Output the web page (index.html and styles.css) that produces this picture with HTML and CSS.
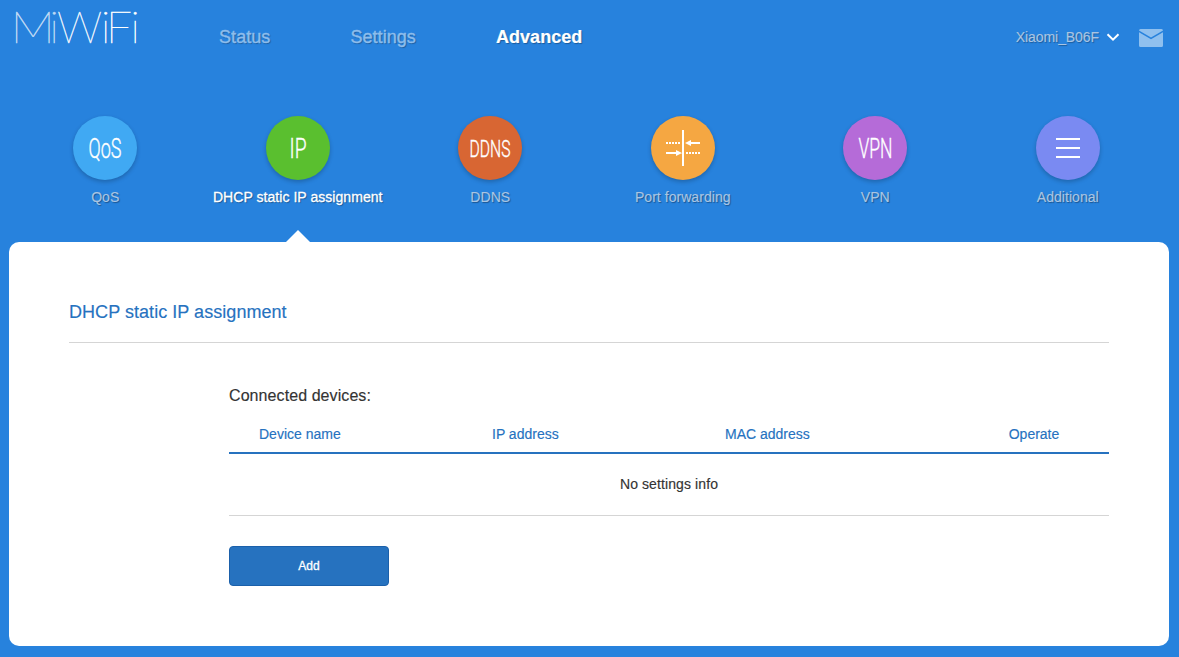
FILE: index.html
```
<!DOCTYPE html>
<html lang="en">
<head>
<meta charset="utf-8">
<title>MiWiFi</title>
<link rel="stylesheet" href="styles.css">
</head>
<body>
<header class="header">
  <svg class="logo" width="130" height="44" viewBox="0 0 130 44" role="img" aria-label="MiWiFi">
    <g class="logo-text">
      <text class="fade" x="-3.500" y="35" textLength="44.500" lengthAdjust="spacingAndGlyphs">M</text>
      <text class="fade" x="35.500" y="35">i</text>
      <text class="mid" x="43" y="35" textLength="45" lengthAdjust="spacingAndGlyphs">W</text>
      <text x="87" y="35">i</text>
      <text x="92" y="35" textLength="26" lengthAdjust="spacingAndGlyphs">F</text>
      <text x="116.500" y="35">i</text>
    </g>
  </svg>
  <nav class="nav">
    <a>Status</a>
    <a>Settings</a>
    <a class="active">Advanced</a>
  </nav>
  <div class="account">
    <span>Xiaomi_B06F</span>
    <svg class="chevron" width="14" height="9" viewBox="0 0 14 9"><path d="M1.500 1.200 7 6.600l5.500-5.400" fill="none" stroke="#fff" stroke-width="2"/></svg>
    <svg class="mail" width="24" height="18" viewBox="0 0 24 18"><path d="M1.500 0h21A1.500 1.500 0 0 1 24 1.500L12 8.500 0 1.500A1.500 1.500 0 0 1 1.500 0ZM0 3.200l12 7 12-7v13.300a1.500 1.500 0 0 1-1.500 1.500h-21A1.500 1.500 0 0 1 0 16.500Z" fill="#8fc0ef"/></svg>
  </div>
</header>
<nav class="tabs">
  <a class="tab"><svg class="disc qos" viewBox="0 0 64 64"><text x="15.500" y="42" font-size="28" textLength="33" lengthAdjust="spacingAndGlyphs">QoS</text></svg><span>QoS</span></a>
  <a class="tab active"><svg class="disc ip" viewBox="0 0 64 64"><text x="23.500" y="42" font-size="28" textLength="17" lengthAdjust="spacingAndGlyphs">IP</text></svg><span>DHCP static IP assignment</span></a>
  <a class="tab"><svg class="disc ddns" viewBox="0 0 64 64"><text x="11.500" y="41" font-size="24" textLength="41" lengthAdjust="spacingAndGlyphs">DDNS</text></svg><span>DDNS</span></a>
  <a class="tab"><svg class="disc port" viewBox="0 0 64 64"><path d="M31 14h2v36h-2zM39 26h10v2H39zM15 36h10v2H15zM34 27l6-3v6zM31 37l-6-3v6z" fill="#fff"/><path d="M15 27h14M35 37h14" stroke="#fff" stroke-width="2" stroke-dasharray="2 1"/></svg><span>Port forwarding</span></a>
  <a class="tab"><svg class="disc vpn" viewBox="0 0 64 64"><text x="15.500" y="42" font-size="28" textLength="34" lengthAdjust="spacingAndGlyphs">VPN</text></svg><span>VPN</span></a>
  <a class="tab"><svg class="disc more" viewBox="0 0 64 64"><path d="M20 22h24v2H20zM20 31h24v2H20zM20 40h24v2H20z" fill="#fff"/></svg><span>Additional</span></a>
</nav>
<main class="panel">
  <h1>DHCP static IP assignment</h1>
  <section class="devices">
    <h2>Connected devices:</h2>
    <table>
      <colgroup><col class="c-name"><col class="c-ip"><col class="c-mac"><col class="c-op"></colgroup>
      <thead><tr><th>Device name</th><th>IP address</th><th>MAC address</th><th class="op">Operate</th></tr></thead>
      <tbody><tr><td colspan="4">No settings info</td></tr></tbody>
    </table>
    <button class="add">Add</button>
  </section>
</main>
</body>
</html>
```
FILE: styles.css
```
* { box-sizing: border-box; }
body {
  margin: 0;
  height: 657px;
  overflow: hidden;
  background: #2782dd;
  color: #333;
  font: 14px/20px "Liberation Sans", Arial, sans-serif;
  -webkit-text-stroke: .15px;
}
.header {
  display: flex;
  height: 74px;
  padding: 0 16px 0 14px;
  text-shadow: 1px 1px 1px rgba(0, 0, 0, .3);
}
.logo { flex: none; margin-top: 8px; overflow: visible; }
.logo-text { font: 100 44.500px Lato, sans-serif; fill: #fff; text-shadow: none; stroke: #fff; stroke-width: .5px; }
.logo-text .fade { opacity: .7; }
.logo-text .mid { opacity: .9; }
.nav {
  display: flex;
  gap: 80px;
  margin-left: 75px;
  font-size: 18px;
  line-height: 74px;
  letter-spacing: .06px;
  color: #8dbdec;
}
.nav a { -webkit-text-stroke: .4px; }
.nav .active { color: #fff; font-weight: bold; -webkit-text-stroke: .2px; }
.account {
  display: flex;
  align-items: center;
  height: 74px;
  margin-left: auto;
  color: #a9c5e3;
}
.account span { letter-spacing: -.08px; }
.chevron { margin-left: 7px; }
.mail { margin: 2px 0 0 19px; }
.tabs { display: flex; width: 1155px; height: 168px; margin-left: 9px; padding-top: 42px; }
.tab {
  display: flex;
  flex: 1;
  position: relative;
  flex-direction: column;
  align-items: center;
  gap: 7px;
  color: #a9c5e3;
  letter-spacing: .05px;
  white-space: nowrap;
  text-shadow: 1px 1px 1px rgba(0, 0, 0, .35);
}
.tab.active { color: #fff; -webkit-text-stroke: .3px; }
.tab.active::after {
  content: "";
  position: absolute;
  bottom: 0;
  border: 12px solid transparent;
  border-top: 0;
  border-bottom-color: #fff;
}
.disc { width: 64px; height: 64px; overflow: visible; border-radius: 50%; box-shadow: 0 2px 4px rgba(0, 0, 0, .22); }
.disc text { font-family: Roboto, sans-serif; font-weight: 300; fill: #fff; stroke: #fff; stroke-width: .4px; text-shadow: none; letter-spacing: 0; }
.qos { background: #40a9f3; }
.ip { background: #5abf2f; }
.ddns { background: #d86633; }
.port { background: #f5a742; }
.vpn { background: #b56bd8; }
.more { background: #7a8af2; }
.panel {
  width: 1160px;
  height: 404px;
  margin-left: 9px;
  padding: 50px 60px 0;
  border-radius: 10px;
  background: #fff;
}
h1 {
  margin: 0;
  height: 51px;
  border-bottom: 1px solid #d5d5d5;
  color: #2672bf;
  font-size: 18px;
  font-weight: normal;
  line-height: 40px;
  letter-spacing: .05px;
}
.devices { padding: 41px 0 0 160px; }
h2 { margin: 0; font-size: 16px; font-weight: normal; line-height: 24px; letter-spacing: .08px; }
table { width: 880px; margin-top: 8px; border-collapse: separate; border-spacing: 0; table-layout: fixed; }
.c-name, .c-ip { width: 233px; }
.c-mac { width: 264px; }
.c-op { width: 150px; }
th {
  height: 38px;
  padding: 0 0 0 30px;
  border-bottom: 2px solid #2672bf;
  color: #2672bf;
  font-weight: normal;
  text-align: left;
}
th.op { padding-left: 0; text-align: center; }
td { height: 62px; padding: 0 0 2px; border-bottom: 1px solid #d5d5d5; text-align: center; letter-spacing: .1px; }
.add {
  display: block;
  width: 160px;
  height: 40px;
  margin-top: 30px;
  padding: 0;
  border: 1px solid #1b60aa;
  border-radius: 4px;
  background: #2672bf;
  color: #fff;
  font: 12px "Liberation Sans", Arial, sans-serif;
  -webkit-text-stroke: .3px;
}
```
